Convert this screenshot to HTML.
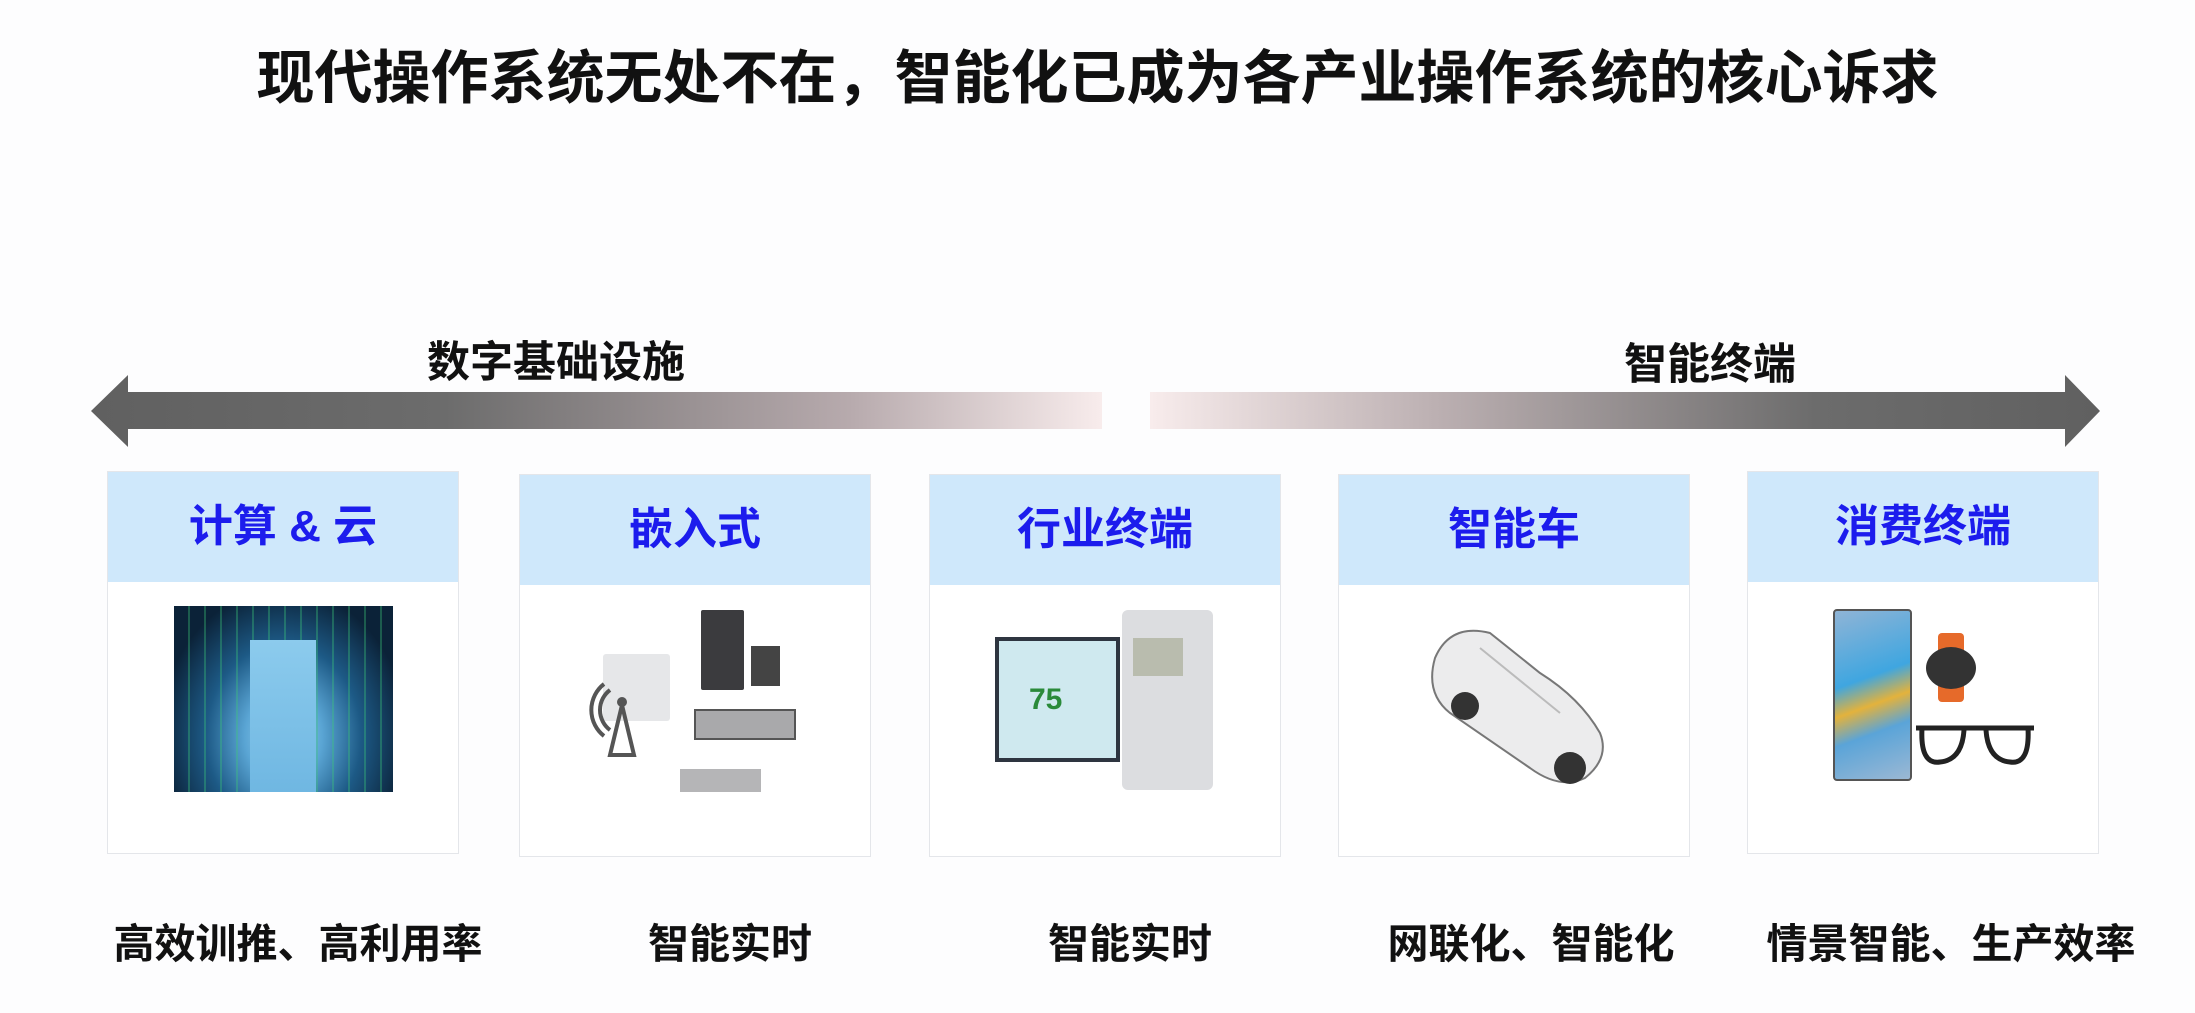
<!DOCTYPE html>
<html><head><meta charset="utf-8"><style>
body{margin:0;width:2195px;height:1013px;background:#fdfdfe;position:relative;overflow:hidden;font-family:"Liberation Sans","Noto Sans CJK SC",sans-serif;font-weight:bold}
.a{position:absolute}
.t{white-space:nowrap;color:#111}
.card{position:absolute;top:471px;width:352px;height:383px;background:#fff;border:1px solid #e4e6ea;box-sizing:border-box}
.hd{height:110px;background:#cfe8fb;color:#1c1ced;font-size:44px;text-align:center;line-height:110px}
.lbl{position:absolute;top:910px;width:460px;text-align:center;font-size:41px;color:#111;white-space:nowrap}
</style></head><body>
<div class="a t" style="left:0;width:2195px;text-align:center;top:46px;font-size:58px;line-height:66px">现代操作系统无处不在，智能化已成为各产业操作系统的核心诉求</div>
<div class="a t" style="left:427px;top:328px;font-size:43px">数字基础设施</div>
<div class="a t" style="left:1624px;top:330px;font-size:43px">智能终端</div>
<svg class="a" style="left:0;top:360px" width="2195" height="100">
<defs>
<linearGradient id="g1" x1="0" x2="1"><stop offset="0" stop-color="#606060"/><stop offset="0.35" stop-color="#6c6c6c"/><stop offset="0.75" stop-color="#b7aaad"/><stop offset="1" stop-color="#f8ecec"/></linearGradient>
<linearGradient id="g2" x1="0" x2="1"><stop offset="0" stop-color="#f8ecec"/><stop offset="0.3" stop-color="#bcb0b2"/><stop offset="0.7" stop-color="#6c6c6c"/><stop offset="1" stop-color="#606060"/></linearGradient>
</defs>
<polygon points="91,51 128,15 128,32 1102,32 1102,69 128,69 128,87" fill="url(#g1)"/>
<polygon points="1150,32 2065,32 2065,15 2100,51 2065,87 2065,69 1150,69" fill="url(#g2)"/>
</svg>
<div class="card" style="left:107px"><div class="hd">计算 &amp; 云</div></div>
<div class="card" style="left:519px;top:474px"><div class="hd">嵌入式</div></div>
<div class="card" style="left:929px;top:474px"><div class="hd">行业终端</div></div>
<div class="card" style="left:1338px;top:474px"><div class="hd">智能车</div></div>
<div class="card" style="left:1747px"><div class="hd">消费终端</div></div>
<!-- server room -->
<div class="a" style="left:174px;top:606px;width:219px;height:186px;background:radial-gradient(ellipse at 50% 70%,#9fd6f2 0,#5aa5d4 25%,#1d5a86 50%,#0b2238 80%);"></div>
<div class="a" style="left:174px;top:606px;width:219px;height:186px;background:repeating-linear-gradient(90deg,rgba(0,0,0,0) 0 14px,rgba(60,200,120,.35) 14px 16px)"></div>
<div class="a" style="left:250px;top:640px;width:66px;height:152px;background:linear-gradient(#8ccbed,#6fb7e2)"></div>
<!-- embedded -->
<div class="a" style="left:603px;top:654px;width:67px;height:67px;background:#e6e7e9;border-radius:3px"></div>
<svg class="a" style="left:580px;top:680px" width="80" height="80"><path d="M30 10 A25 25 0 0 0 30 50 M24 4 A33 33 0 0 0 24 56" stroke="#555" stroke-width="4" fill="none"/><path d="M42 25 L30 75 L54 75 Z" fill="none" stroke="#555" stroke-width="4"/><circle cx="42" cy="22" r="5" fill="#555"/></svg>
<div class="a" style="left:701px;top:610px;width:43px;height:80px;background:#3b3b3e;border-radius:2px"></div>
<div class="a" style="left:751px;top:646px;width:29px;height:40px;background:#444"></div>
<div class="a" style="left:694px;top:709px;width:102px;height:31px;background:#a9a9ab;border:2px solid #555;box-sizing:border-box"></div>
<div class="a" style="left:680px;top:769px;width:81px;height:23px;background:#b5b5b7"></div>
<!-- industry -->
<div class="a" style="left:995px;top:637px;width:125px;height:125px;background:#2e3540;padding:4px;box-sizing:border-box"><div style="width:100%;height:100%;background:#cfe9ef;color:#2a8a3a;font-size:30px;line-height:117px;padding-left:30px;box-sizing:border-box">75</div></div>
<div class="a" style="left:1122px;top:610px;width:91px;height:180px;background:#dcdde0;border-radius:6px"></div>
<div class="a" style="left:1133px;top:638px;width:50px;height:38px;background:#b9bcae"></div>
<!-- car -->
<svg class="a" style="left:1420px;top:618px" width="195" height="175"><path d="M15 40 Q30 5 70 15 L120 55 Q160 80 180 115 Q190 140 165 160 Q140 172 110 150 L30 95 Q5 75 15 40 Z" fill="#ececed" stroke="#777" stroke-width="2"/><path d="M60 30 L140 95" stroke="#bbb" stroke-width="2"/><circle cx="150" cy="150" r="16" fill="#333"/><circle cx="45" cy="88" r="14" fill="#333"/></svg>
<!-- consumer -->
<div class="a" style="left:1833px;top:609px;width:79px;height:172px;background:linear-gradient(160deg,#8fb4d6,#3fa6e0 40%,#e3b23c 55%,#5aa4d8 70%,#9bb8d4);border:2px solid #555;border-radius:4px;box-sizing:border-box"></div>
<div class="a" style="left:1938px;top:633px;width:26px;height:69px;background:#e66a2a;border-radius:4px"></div>
<div class="a" style="left:1926px;top:647px;width:50px;height:42px;background:#333;border-radius:50%"></div>
<svg class="a" style="left:1912px;top:720px" width="126" height="52"><path d="M4 8 H122 M10 8 Q8 45 28 42 Q50 40 52 10 M74 10 Q76 40 98 42 Q118 45 116 8" stroke="#222" stroke-width="5" fill="none"/></svg>
<div class="lbl" style="left:68px">高效训推、高利用率</div>
<div class="lbl" style="left:500px">智能实时</div>
<div class="lbl" style="left:900px">智能实时</div>
<div class="lbl" style="left:1301px">网联化、智能化</div>
<div class="lbl" style="left:1721px">情景智能、生产效率</div>
</body></html>
